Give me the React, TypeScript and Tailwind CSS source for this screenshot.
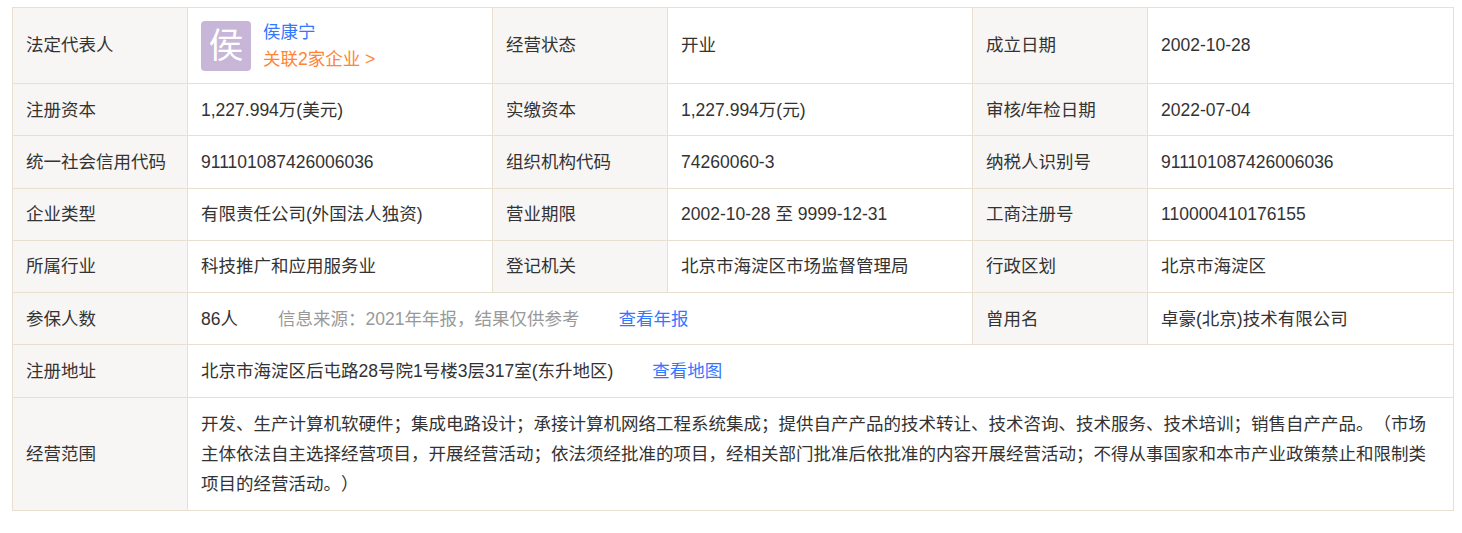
const L = ({ children, shift }: { children: React.ReactNode; shift?: boolean }) => (
  <td className={shift ? "border border-[#e9dfd0] bg-[#f8f6f4] px-[13px] pt-[2px] pb-0 align-middle" : "border border-[#e9dfd0] bg-[#f8f6f4] px-[13px] py-0 align-middle"}>{children}</td>
);
const V = ({ children, colSpan, shift }: { children: React.ReactNode; colSpan?: number; shift?: boolean }) => (
  <td colSpan={colSpan} className={shift ? "border border-[#e9dfd0] bg-white px-[13px] pt-[2px] pb-0 align-middle" : "border border-[#e9dfd0] bg-white px-[13px] py-0 align-middle"}>{children}</td>
);
const rows: string[][] = [
  ["注册资本", "1,227.994万(美元)", "实缴资本", "1,227.994万(元)", "审核/年检日期", "2022-07-04"],
  ["统一社会信用代码", "911101087426006036", "组织机构代码", "74260060-3", "纳税人识别号", "911101087426006036"],
  ["企业类型", "有限责任公司(外国法人独资)", "营业期限", "2002-10-28 至 9999-12-31", "工商注册号", "110000410176155"],
  ["所属行业", "科技推广和应用服务业", "登记机关", "北京市海淀区市场监督管理局", "行政区划", "北京市海淀区"],
];
const heights = ["h-[52px]", "h-[53px]", "h-[52px]", "h-[52px]"];

export default function App() {
  return (
    <div className="bg-white pl-[12px] pt-[7px] h-[533px] w-[1462px] text-[17.5px] leading-[29px] [text-spacing-trim:space-all] text-[#333333] font-['Liberation_Sans','Noto_Sans_CJK_SC',sans-serif]">
      <table className="w-[1441px] table-fixed border-collapse">
        <colgroup>
          <col className="w-[175px]" />
          <col className="w-[305px]" />
          <col className="w-[175px]" />
          <col className="w-[305px]" />
          <col className="w-[175px]" />
          <col className="w-[306px]" />
        </colgroup>
        <tbody>
          <tr className="h-[76px]">
            <L>法定代表人</L>
            <V>
              <div className="flex items-center gap-[12px]">
                <div className="flex h-[50px] w-[50px] items-center justify-center rounded-[4px] bg-[#c8b6d8] text-[35px] leading-none text-white">侯</div>
                <div className="flex flex-col">
                  <span className="leading-[27px] text-[#3377ff]">侯康宁</span>
                  <span className="leading-[27px] text-[#ff8533]">关联2家企业 &gt;</span>
                </div>
              </div>
            </V>
            <L>经营状态</L>
            <V>开业</V>
            <L>成立日期</L>
            <V>2002-10-28</V>
          </tr>
          {rows.map((r, i) => (
            <tr key={r[0]} className={heights[i]}>
              <L shift={i === 0}>{r[0]}</L>
              <V shift={i === 0}>{r[1]}</V>
              <L shift={i === 0}>{r[2]}</L>
              <V shift={i === 0}>{r[3]}</V>
              <L shift={i === 0}>{r[4]}</L>
              <V shift={i === 0}>{r[5]}</V>
            </tr>
          ))}
          <tr className="h-[52px]">
            <L shift>参保人数</L>
            <V shift colSpan={3}>
              <div className="flex">
                <span>86人</span>
                <span className="ml-[40px] text-[#999999]">信息来源：2021年年报，结果仅供参考</span>
                <span className="ml-[39px] text-[#3377ff]">查看年报</span>
              </div>
            </V>
            <L shift>曾用名</L>
            <V shift>卓豪(北京)技术有限公司</V>
          </tr>
          <tr className="h-[53px]">
            <L>注册地址</L>
            <V colSpan={5}>
              <div className="flex">
                <span>北京市海淀区后屯路28号院1号楼3层317室(东升地区)</span>
                <span className="ml-[39px] text-[#3377ff]">查看地图</span>
              </div>
            </V>
          </tr>
          <tr className="h-[113px]">
            <L>经营范围</L>
            <V colSpan={5}>
              <div className="leading-[30px]">
                开发、生产计算机软硬件；集成电路设计；承接计算机网络工程系统集成；提供自产产品的技术转让、技术咨询、技术服务、技术培训；销售自产产品。（市场主体依法自主选择经营项目，开展经营活动；依法须经批准的项目，经相关部门批准后依批准的内容开展经营活动；不得从事国家和本市产业政策禁止和限制类项目的经营活动。）
              </div>
            </V>
          </tr>
        </tbody>
      </table>
    </div>
  );
}
